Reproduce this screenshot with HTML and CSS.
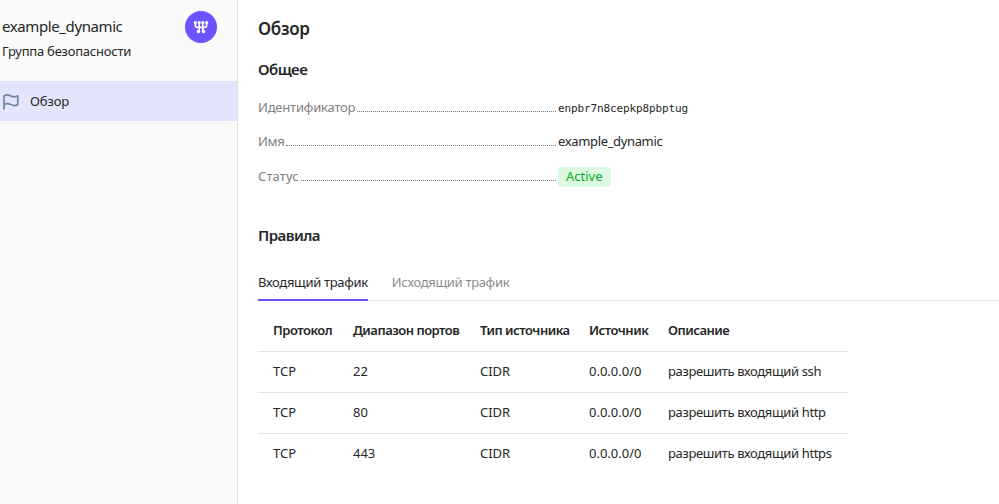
FILE: index.html
```html
<!DOCTYPE html>
<html lang="ru">
<head>
<meta charset="utf-8">
<title>example_dynamic</title>
<link rel="stylesheet" href="styles.css">
</head>
<body>
<div class="app">
  <aside class="sidebar">
    <header class="resource">
      <div class="resource-text">
        <div class="resource-name">example_dynamic</div>
        <div class="resource-type">Группа безопасности</div>
      </div>
      <span class="resource-icon">
        <svg width="16" height="16" viewBox="0 0 16 16" fill="none" stroke="#fff" stroke-width="1.7">
          <path d="M2.400 4v2.700q0 1.600 1.600 1.600h8q1.600 0 1.600-1.600V4M6.200 3v10M9.800 3v10"/>
          <g fill="#fff" stroke="none"><circle cx="2.400" cy="3.500" r="1.600"/><circle cx="6.200" cy="3.500" r="1.500"/><circle cx="9.800" cy="3.500" r="1.500"/><circle cx="13.600" cy="3.500" r="1.600"/><circle cx="5.500" cy="12.500" r="1.700"/><circle cx="10.500" cy="12.500" r="1.700"/></g>
        </svg>
      </span>
    </header>
    <nav>
      <a class="nav-item">
        <svg width="18" height="18" viewBox="0 0 18 18" fill="none" stroke="#71879b" stroke-width="1.7" stroke-linecap="round" stroke-linejoin="round">
          <path d="M2 17V4C4 2.500 6.400 2.700 8.800 3.900S13.600 5.100 15.800 3.800v8.700c-2.200 1.400-4.600 1.300-7 .1s-4.800-1.300-6.800.2"/>
        </svg>
        <span>Обзор</span>
      </a>
    </nav>
  </aside>
  <main class="content">
    <h1>Обзор</h1>
    <h2>Общее</h2>
    <dl class="details">
      <div class="row"><dt><span>Идентификатор</span></dt><dd class="mono">enpbr7n8cepkp8pbptug</dd></div>
      <div class="row row-name"><dt><span>Имя</span></dt><dd class="name">example_dynamic</dd></div>
      <div class="row row-status"><dt><span>Статус</span></dt><dd><span class="badge">Active</span></dd></div>
    </dl>
    <h2 class="rules">Правила</h2>
    <div class="tabs"><a class="tab active">Входящий трафик</a><a class="tab">Исходящий трафик</a></div>
    <table>
      <colgroup><col class="c1"><col class="c2"><col class="c3"><col class="c4"><col class="c5"></colgroup>
      <thead><tr><th>Протокол</th><th>Диапазон портов</th><th>Тип источника</th><th>Источник</th><th>Описание</th></tr></thead>
      <tbody>
        <tr><td>TCP</td><td>22</td><td>CIDR</td><td>0.0.0.0/0</td><td class="desc">разрешить входящий ssh</td></tr>
        <tr><td>TCP</td><td>80</td><td>CIDR</td><td>0.0.0.0/0</td><td class="desc">разрешить входящий http</td></tr>
        <tr><td>TCP</td><td>443</td><td>CIDR</td><td>0.0.0.0/0</td><td class="desc">разрешить входящий https</td></tr>
      </tbody>
    </table>
  </main>
</div>
</body>
</html>
```
FILE: styles.css
```css
* { box-sizing: border-box; }
body { margin: 0; background: #fff; color: #262626; font: 13px/18px "Noto Sans", sans-serif; overflow: hidden; white-space: nowrap; }
.app { display: flex; height: 504px; }
.sidebar { flex: 0 0 238px; background: #fafafa; border-right: 1px solid #e0e0e0; }
.resource { display: flex; justify-content: space-between; height: 81px; padding: 11px 20px 0 2px; }
.resource-text { padding-top: 5px; }
.resource-name { font-size: 15px; line-height: 20px; letter-spacing: -0.4px; }
.resource-type { margin-top: 6px; letter-spacing: -0.23px; }
.resource-icon { width: 32px; height: 32px; border-radius: 50%; background: #6b53ff; display: flex; align-items: center; justify-content: center; }
.nav-item { display: flex; align-items: center; height: 40px; padding-left: 2px; gap: 10px; background: #e2e5fc; }
.nav-item span { letter-spacing: -0.1px; }
.content { flex: 1; min-width: 0; padding: 19px 0 0 20px; }
h1, h2 { margin: 0; font-weight: 600; }
h1 { font-size: 17px; line-height: 20px; letter-spacing: -0.3px; }
h2 { font-size: 15px; line-height: 20px; margin-top: 20px; letter-spacing: -0.55px; }
.details { margin: 19px 0 0; }
.row { display: flex; height: 18px; margin-bottom: 16px; }
.row-status { margin-top: 17px; }
dt { flex: 0 0 300px; display: flex; color: #808080; }
dt span { letter-spacing: -0.2px; }
.row-name dt span { letter-spacing: -0.3px; }
.row-status dt span { letter-spacing: 0.1px; }
dt::after { content: ""; flex: 1; height: 13px; border-bottom: 1px dotted #777; margin: 0 2px 0 2px; }
dd { margin: 0; }
.name { letter-spacing: -0.35px; }
.mono { font: 11px/21px "DejaVu Sans Mono", monospace; letter-spacing: -0.12px; }
.badge { display: block; height: 20px; line-height: 18px; padding: 0 8px; border-radius: 3px; background: #dbfae1; color: #0ca52b; }
h2.rules { margin-top: 40px; }
.tabs { display: flex; gap: 24px; height: 37px; margin-top: 19px; border-bottom: 1px solid #e5e5e5; letter-spacing: -0.32px; }
.tab { height: 37px; padding-top: 9px; color: #8c8c8c; }
.tab.active { color: #262626; border-bottom: 2px solid #6b53ff; }
table { border-collapse: collapse; table-layout: fixed; width: 589px; margin-top: 9px; }
.c1 { width: 85px; } .c2 { width: 127px; } .c3 { width: 109px; } .c4 { width: 79px; } .c5 { width: 189px; }
th, td { height: 41px; padding: 0 0 0 10px; text-align: left; font-weight: 400; }
td { padding-bottom: 2px; }
th:first-child, td:first-child { padding-left: 15px; }
th { font-weight: 600; letter-spacing: -0.5px; }
.desc { letter-spacing: -0.35px; }
tr { border-bottom: 1px solid #e5e5e5; }
tbody tr:last-child { border-bottom: 0; }
```
